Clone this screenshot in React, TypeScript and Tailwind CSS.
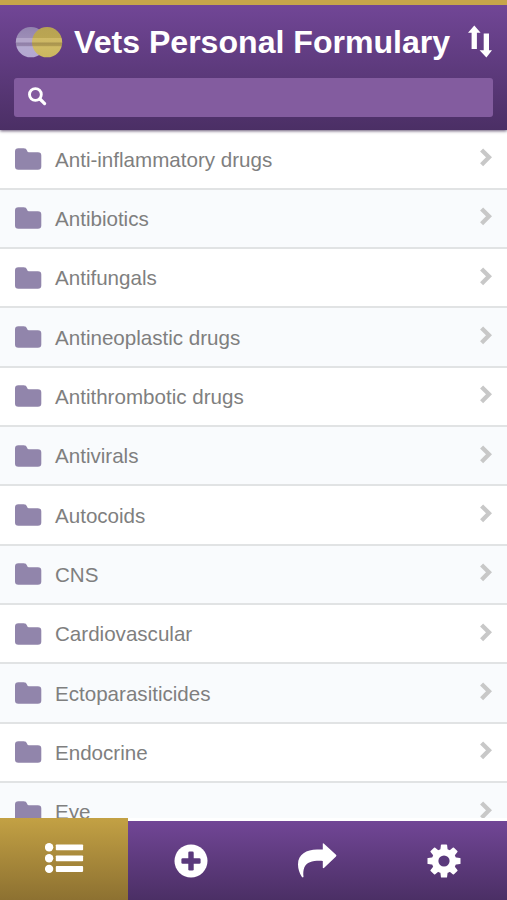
import React from 'react';

const CATEGORIES = [
    'Anti-inflammatory drugs',
    'Antibiotics',
    'Antifungals',
    'Antineoplastic drugs',
    'Antithrombotic drugs',
    'Antivirals',
    'Autocoids',
    'CNS',
    'Cardiovascular',
    'Ectoparasiticides',
    'Endocrine',
    'Eye',
];

const Logo = () => (
    <svg width="48" height="32" viewBox="15 25 48 32" className="shrink-0">
        <defs>
            <linearGradient id="silver" x1="0" y1="0" x2="0" y2="1">
                <stop offset="0" stopColor="#9384b0" />
                <stop offset=".35" stopColor="#9c8db6" />
                <stop offset=".37" stopColor="#b3a6c9" />
                <stop offset=".5" stopColor="#b3a6c9" />
                <stop offset=".52" stopColor="#8f7fa8" />
                <stop offset=".61" stopColor="#9686ac" />
                <stop offset=".65" stopColor="#b5abd0" />
                <stop offset="1" stopColor="#b4a8d0" />
            </linearGradient>
            <linearGradient id="gold" x1="0" y1="0" x2="0" y2="1">
                <stop offset="0" stopColor="#b7a253" />
                <stop offset=".35" stopColor="#bba652" />
                <stop offset=".37" stopColor="#d0ba67" />
                <stop offset=".5" stopColor="#cdb864" />
                <stop offset=".52" stopColor="#a8934f" />
                <stop offset=".61" stopColor="#b19c51" />
                <stop offset=".65" stopColor="#d0bb65" />
                <stop offset="1" stopColor="#cab65f" />
            </linearGradient>
        </defs>
        <circle cx="30.9" cy="41.2" r="15.1" fill="url(#silver)" />
        <circle cx="47.1" cy="41.2" r="15.1" fill="url(#gold)" />
    </svg>
);

const SortIcon = () => (
    <svg width="24" height="33" viewBox="0 0 24 33" fill="#fff" className="shrink-0">
        <path d="M6.3.6 12.6 7.8H8.9V23.9H3.6V7.8H0ZM15.7 8.6H21V25.3H24L18.4 32.4 11.6 25.3H15.7Z" />
    </svg>
);

const FolderIcon = () => (
    <svg width="27" height="22" viewBox="0 0 27 22" fill="#9185ab" className="shrink-0">
        <path d="M3.4 .2H8.6Q11.4 .2 12 2.6 12.3 4.2 13.6 4.2H22.9Q26.3 4.2 26.3 7.4V18.4Q26.3 21.7 22.9 21.7H3.4Q0 21.7 0 18.4V3.5Q0 .2 3.4 .2Z" />
    </svg>
);

const ChevronIcon = () => (
    <svg width="12" height="19" viewBox="0 0 12 19" fill="none" stroke="#c8c8c8" strokeWidth="4.3" className="shrink-0">
        <path d="M1.6 1.9 9 9.3 1.6 16.7" />
    </svg>
);

const ListIcon = () => (
    <svg width="39" height="31" viewBox="0 0 39 31" fill="#fff">
        {[4.3, 15.2, 25.9].map((y) => (
            <g key={y}>
                <circle cx="4.1" cy={y} r="4.2" />
                <rect x="10.8" y={y - 2.8} width="27.3" height="5.8" rx=".8" />
            </g>
        ))}
    </svg>
);

const AddIcon = () => (
    <svg width="34" height="34" viewBox="0 0 34 34">
        <circle cx="17" cy="17" r="16.5" fill="#fff" />
        <rect x="14.3" y="7.4" width="5.4" height="19.2" rx="1.3" fill="#5a397c" />
        <rect x="7.4" y="14.3" width="19.2" height="5.4" rx="1.3" fill="#5a397c" />
    </svg>
);

const ShareIcon = () => (
    <svg width="39" height="35" viewBox="0 0 39 35" fill="#fff">
        <path d="M24.8.5Q25.2 0 26 .7L38 11.7Q38.9 12.5 38 13.4L26.2 24.7Q24.8 25.8 24.8 24.4V17.9C15.5 17.5 8.8 18.6 6.3 24.5 5.2 27.3 5.1 30.6 5.5 33.8 5.2 34.8 4 34.5 3.6 33.6 1.4 29.5 0 26.1 0 21.5 0 11.3 8.5 6.6 19 6.6H24.8Z" />
    </svg>
);

const GearIcon = () => (
    <svg width="34" height="34" viewBox="-17 -17 34 34">
        <g fill="#fff">
            <circle r="12.2" />
            {[0, 45, 90, 135, 180, 225, 270, 315].map((angle) => (
                <path key={angle} transform={`rotate(${angle})`} d="M-3.7-10.5-3.1-15.9Q-3-16.5-2.4-16.5H2.4Q3-16.5 3.1-15.9L3.7-10.5Z" />
            ))}
        </g>
        <circle r="5.6" fill="#5a397c" />
    </svg>
);

export default function App() {
    return (
        <div className="flex h-[900px] w-[507px] flex-col overflow-hidden bg-white font-['Liberation_Sans',Arial,sans-serif]">
            {/* Header */}
            <header className="z-10 h-[130px] shrink-0 border-t-5 border-[#c7a549] bg-linear-to-b from-[#714696] to-[#4b2f65] shadow-[0_1px_3px_rgba(50,30,70,0.75)]">
                <div className="flex h-[73px] items-center pl-[15px]">
                    <Logo />
                    <h1 className="ml-[11px] w-[394px] shrink-0 whitespace-nowrap pt-px text-[32.1px] font-bold leading-none text-white">
                        Vets Personal Formulary
                    </h1>
                    <SortIcon />
                </div>
                <div className="mx-3.5 flex h-[39px] items-center rounded-[3px] bg-[#835c9f] pl-3.5">
                    <svg width="19" height="19" viewBox="0 0 19 19" fill="none" stroke="#fff" className="mb-0.5">
                        <circle cx="7.4" cy="7.5" r="5.9" strokeWidth="2.9" />
                        <path d="m12 12 4.6 4.6" strokeWidth="3.2" strokeLinecap="round" />
                    </svg>
                </div>
            </header>

            {/* Categories */}
            <ul className="min-h-0 flex-1 overflow-hidden pt-[0.4px]">
                {CATEGORIES.map((name) => (
                    <li
                        key={name}
                        className="flex h-[59.33px] items-center border-b-2 border-[#e1e3e4] bg-white px-[15px] even:bg-[#f9fbfd]"
                    >
                        <FolderIcon />
                        <span className="ml-[13px] flex-1 pt-0.5 text-[20.6px] leading-none tracking-[-0.01px] text-[#7f7f7f]">{name}</span>
                        <div className="pb-[3px]">
                            <ChevronIcon />
                        </div>
                    </li>
                ))}
            </ul>

            {/* Tab bar */}
            <nav className="z-10 flex h-[82px] shrink-0 items-end">
                <button className="flex h-[82px] w-32 items-center justify-center bg-linear-to-b from-[#c3a144] to-[#8d7131] pb-0.5">
                    <ListIcon />
                </button>
                <div className="flex h-[79.5px] flex-1 items-center bg-linear-to-b from-[#714696] to-[#4b2f65] pt-0.5">
                    <button className="flex flex-1 justify-center"><AddIcon /></button>
                    <button className="flex flex-1 justify-center pb-0.5"><ShareIcon /></button>
                    <button className="flex flex-1 justify-center"><GearIcon /></button>
                </div>
            </nav>
        </div>
    );
}
